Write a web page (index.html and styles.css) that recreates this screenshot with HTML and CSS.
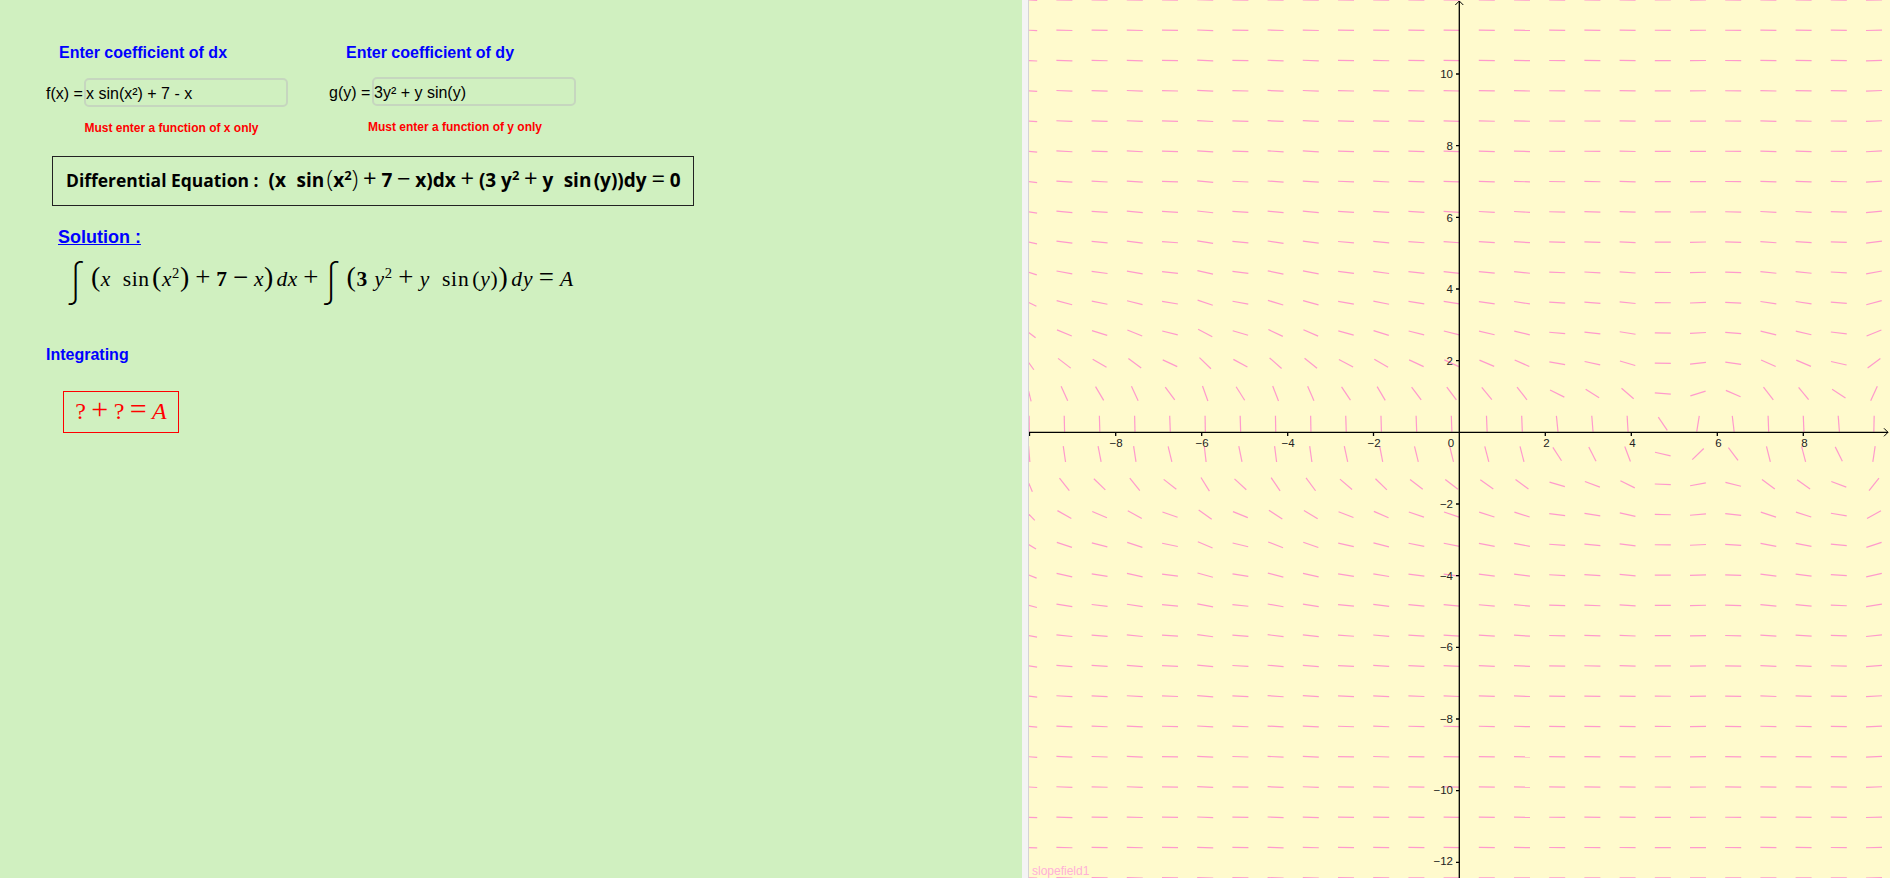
FILE: index.html
```html
<!DOCTYPE html>
<html lang="en">
<head>
<meta charset="utf-8">
<title>Slope field</title>
<link rel="stylesheet" href="styles.css">
</head>
<body>
<main class="app">
  <section class="panel">
    <div class="inputs">
      <div class="col col-x">
        <div class="heading">Enter coefficient of dx</div>
        <label class="row"><span class="fname">f(x) =</span><input class="field" value="x sin(x²) + 7 - x"></label>
        <div class="hint">Must enter a function of x only</div>
      </div>
      <div class="col col-y">
        <div class="heading">Enter coefficient of dy</div>
        <label class="row"><span class="fname">g(y) =</span><input class="field" value="3y² + y sin(y)"></label>
        <div class="hint">Must enter a function of y only</div>
      </div>
    </div>

    <div class="eq-box">
      <span class="eq-title">Differential Equation :</span>
      <span class="eq">(x<span class="sp"></span>sin<span class="thin"></span><span class="big">(</span>x<sup>2</sup><span class="big">)</span><span class="op">+</span>7<span class="op">−</span>x)dx<span class="op">+</span>(3 y<sup>2</sup><span class="op">+</span>y<span class="sp"></span>sin<span class="thin"></span>(y))dy<span class="op">=</span>0</span>
    </div>

    <h2 class="solution">Solution :</h2>
    <div class="integral">
      <span class="int">∫</span><span class="paren-a"><span class="big">(</span><i>x</i><span class="sp"></span>sin<span class="thin"></span><span class="big">(</span><i>x</i><sup>2</sup><span class="big">)</span><span class="op">+</span><b>7</b><span class="op">−</span><i>x</i><span class="big">)</span><span class="thin"></span><i>dx</i><span class="op">+</span></span><span class="int">∫</span><span class="paren-b"><span class="big">(</span><b>3</b> <i>y</i><sup>2</sup><span class="op">+</span><i>y</i><span class="sp"></span>sin<span class="thin"></span>(<i>y</i>)<span class="big">)</span><span class="thin"></span><i>dy</i><span class="op">=</span><i>A</i></span>
    </div>

    <div class="integrating">Integrating</div>
    <div class="answer"><span>?<span class="op">+</span>?<span class="op">=</span><i>A</i></span></div>
  </section>

  <div class="divider"></div>

  <section class="graph">
    <svg class="plot" viewBox="1029 0 861 878" width="861" height="878" xmlns="http://www.w3.org/2000/svg">
      <g id="slopes" class="slopes"></g>
      <g class="axes">
        <path d="M1029 432.3H1888M1459.3 878V1"/>
        <path class="arrow" d="M1884 428.3L1888 432.3L1884 436.3M1455.3 5L1459.3 1L1463.3 5"/>
        <path d="M1029.5 432V436M1115.7 432V436M1201.7 432V436M1287.7 432V436M1373.5 432V436M1545.3 432V436M1631.3 432V436M1717.3 432V436M1803.3 432V436"/>
        <path d="M1456 74H1459M1456 145.7H1459M1456 217.4H1459M1456 289H1459M1456 360.7H1459M1456 504H1459M1456 575.7H1459M1456 647.4H1459M1456 719H1459M1456 790.7H1459M1456 862.4H1459"/>
      </g>
      <g class="xlabels">
        <text x="1116" y="447">−8</text><text x="1202" y="447">−6</text><text x="1288" y="447">−4</text><text x="1374" y="447">−2</text>
        <text x="1451" y="447">0</text>
        <text x="1546.5" y="447">2</text><text x="1632.5" y="447">4</text><text x="1718.5" y="447">6</text><text x="1804.5" y="447">8</text>
      </g>
      <g class="ylabels">
        <text x="1453" y="78">10</text><text x="1453" y="150">8</text><text x="1453" y="222">6</text><text x="1453" y="293">4</text><text x="1453" y="365">2</text>
        <text x="1453" y="508">−2</text><text x="1453" y="580">−4</text><text x="1453" y="651">−6</text><text x="1453" y="723">−8</text><text x="1453" y="794">−10</text><text x="1453" y="865">−12</text>
      </g>
      <text class="caption" x="1032" y="875">slopefield1</text>
    </svg>
  </section>
</main>
<script src="script.js"></script>
</body>
</html>
```
FILE: styles.css
```css
* { box-sizing: border-box; }
html, body { margin: 0; padding: 0; background: #fff; }
body { font-family: "Liberation Sans", Arial, sans-serif; overflow: hidden; }
.app { display: flex; width: 1890px; height: 878px; }
.panel { width: 1022px; flex: none; background: #d0f0c0; padding-top: 43px; }
.divider { width: 7px; flex: none; background: #f4f4f4; border-right: 1px solid #d4d4d4; }
.graph { flex: 1; background: #fffacd; overflow: hidden; }
.plot { display: block; }

.inputs { display: flex; margin-left: 46px; }
.col-x { width: 283px; }
.col-y { width: 260px; }
.heading { color: #0000ff; font-weight: 700; font-size: 16px; line-height: 20px; }
.col-x .heading { margin-left: 13px; }
.col-y .heading { margin-left: 17px; }
.row { display: flex; align-items: center; height: 29px; margin-top: 15px; }
.col-y .row { margin-top: 14px; }
.fname { font-size: 16px; color: #000; white-space: nowrap; padding-top: 2px; }
.col-x .fname { width: 38px; }
.col-y .fname { width: 43px; }
.field { width: 204px; height: 29px; padding: 2px 0 0 0; font: 16px "Liberation Sans", Arial, sans-serif; color: #000; background: transparent; border: 2px solid #c6d6bf; border-radius: 5px; outline: none; }
.hint { color: #ff0000; font-weight: 700; font-size: 12px; line-height: 14px; margin-top: 14px; }
.col-x .hint { margin-left: 38.5px; }
.col-y .hint { margin-left: 39px; }

.eq-box { display: flex; align-items: center; width: 642px; height: 50px; margin: 21px 0 0 52px; padding: 0 0 2px 13px; border: 1px solid #222; white-space: nowrap; color: #000; font-family: "Open Sans", sans-serif; font-weight: 700; font-size: 19px; }
.eq-title { width: 202.6px; flex: none; font-size: 17.45px; }
.eq { display: inline-block; }
.eq sup, .integral sup { font-size: 0.68em; line-height: 0; vertical-align: 0.55em; }
.op { margin: 0 0.2em; font-size: 1.25em; line-height: 0; font-weight: 400; }
.sp { display: inline-block; width: 0.55em; }
.thin { display: inline-block; width: 0.12em; }
.big { font-size: 1.3em; line-height: 0; font-weight: 300; }

.solution { margin: 20px 0 0 58px; font-size: 18px; line-height: 22px; font-weight: 700; color: #0000ff; text-decoration: underline; }
.integral { display: flex; align-items: center; height: 48px; margin: 7px 0 0 69px; white-space: nowrap; font-family: "Liberation Serif", serif; font-size: 21.5px; letter-spacing: 0.55px; color: #000; }
.paren-b { letter-spacing: 0.85px; }
.int { width: 22px; flex: none; font-family: Inter, sans-serif; font-weight: 200; font-size: 44px; line-height: 48px; letter-spacing: 0; }
.integrating { margin: 42px 0 0 46px; color: #0000ff; font-weight: 700; font-size: 16px; line-height: 20px; }
.answer { display: flex; align-items: center; justify-content: center; width: 116px; height: 42px; margin: 26px 0 0 63px; padding-bottom: 1px; border: 1px solid #ff0000; color: #ff0000; font-family: "Liberation Serif", serif; font-size: 24px; }
.answer .op { margin: 0 0.18em; }

.slopes line { stroke: #ff99cc; stroke-width: 1.2; }
.axes path { fill: none; stroke: #000; stroke-width: 1.3; }
.axes .arrow { stroke-width: 1; }
.xlabels text, .ylabels text { font: 11.5px "Liberation Sans", Arial, sans-serif; fill: #222; }
.xlabels text { text-anchor: middle; }
.ylabels text { text-anchor: end; }
.caption { font: 12px "Liberation Sans", Arial, sans-serif; fill: #ffb0d8; }
```
FILE: script.js
```js
(function () {
  var NS = "http://www.w3.org/2000/svg";
  var group = document.getElementById("slopes");
  var ox = 1459.3, oy = 432.3, ux = 43, uy = 35.85;
  function f(x) { return x * Math.sin(x * x) + 7 - x; }
  function g(y) { return 3 * y * y + y * Math.sin(y); }
  for (var c = 0; c < 25; c++) {
    for (var r = 0; r < 30; r++) {
      var sx = 1029.2 + c * 35.2, sy = r * 30.27;
      var x = (sx - ox) / ux, y = (oy - sy) / uy;
      var dx = g(y) * ux, dy = f(x) * uy;
      var len = Math.sqrt(dx * dx + dy * dy) || 1;
      var hx = 8 * dx / len, hy = 8 * dy / len;
      var l = document.createElementNS(NS, "line");
      l.setAttribute("x1", (sx - hx).toFixed(2));
      l.setAttribute("y1", (sy - hy).toFixed(2));
      l.setAttribute("x2", (sx + hx).toFixed(2));
      l.setAttribute("y2", (sy + hy).toFixed(2));
      group.appendChild(l);
    }
  }
})();
```
